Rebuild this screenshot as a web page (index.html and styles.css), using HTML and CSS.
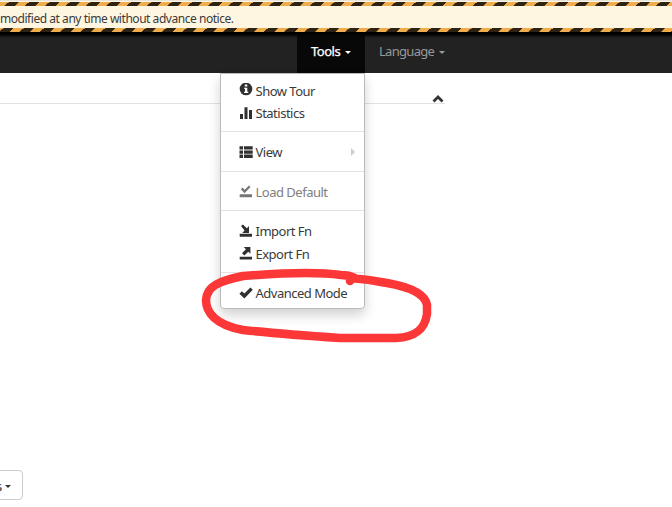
FILE: index.html
```html
<!DOCTYPE html>
<html lang="en">
<head>
<meta charset="utf-8">
<title>Tools</title>
<link rel="stylesheet" href="styles.css">
</head>
<body>
<div class="notice">
  <svg class="tape"><defs><pattern id="top" width="20.36" height="4" patternUnits="userSpaceOnUse" x="4.8"><path d="M3.9 0h9.8l-4 4H-.1z"/></pattern></defs><rect width="672" height="4" fill="url(#top)"/></svg>
  <p>modified at any time without advance notice.</p>
  <svg class="tape"><defs><pattern id="bottom" width="20.36" height="4" patternUnits="userSpaceOnUse" x="19.8"><path d="M3.9 0h9.8l-4 4H-.1z"/></pattern></defs><rect width="672" height="4" fill="url(#bottom)"/></svg>
</div>
<nav class="navbar">
  <div class="nav-item active">Tools<i class="caret"></i>
    <ul class="menu">
      <li><svg viewBox="0 0 14 14"><circle cx="7" cy="6" r="6.3"/><path fill="#fff" d="M5.8 1.6h2.5v2H5.8zM5 4.7h3.3v4h1v1.2H5V8.7h1V5.8H5z"/></svg><span>Show Tour</span></li>
      <li><svg viewBox="0 0 14 14"><path d="M1 8h3v5H1zM5.5 1.3h3V13h-3zM10 4h3v9h-3z"/></svg><span>Statistics</span></li>
      <li class="divider"></li>
      <li><svg viewBox="0 0 14 14"><path d="M.5 1.2H4v3.3H.5zM5 1.2h8.7v3.3H5zM.5 5.4H4v3.3H.5zM5 5.4h8.7v3.3H5zM.5 9.6H4v3.3H.5zM5 9.6h8.7v3.3H5z"/></svg><span>View</span><i class="arrow"></i></li>
      <li class="divider"></li>
      <li class="disabled"><svg viewBox="0 0 14 14"><path d="M.7 9.3h12.3v2.9H.7zM1.8 4.3l1.8-1.8 2 2.2L10 .4l1.5 1.5L5.5 8.2z"/></svg><span>Load Default</span></li>
      <li class="divider"></li>
      <li><svg viewBox="0 0 14 14"><path d="M.7 9.8h12.3v2.9H.7zM2 2 4 .4l3.8 3.8L10 2v7H3.3l2.2-2.5z"/></svg><span>Import Fn</span></li>
      <li><svg viewBox="0 0 14 14"><path d="M.7 9.7h12.3v2.8H.7zM4.8 0h6.6v6.8L9.3 4.7 5.4 8.6 3 6.2l3.9-3.9z"/></svg><span>Export Fn</span></li>
      <li class="divider"></li>
      <li><svg viewBox="0 0 14 14"><path d="M.4 7.7 2.9 5.2l2.5 2.4 6-6.2 2.4 2.4-8.4 8.6z"/></svg><span>Advanced Mode</span></li>
    </ul>
  </div>
  <div class="nav-item language">Language<i class="caret"></i></div>
</nav>
<main>
  <div class="panel-head"><svg class="chevron" viewBox="0 0 12 8"><path d="M1.5 6.5 6 2l4.5 4.5"/></svg></div>
  <button class="select">s<i class="caret"></i></button>
</main>
<svg class="marker" viewBox="0 0 672 507"><path d="M350 281L350 278C365 279 377 281 387 283C410 287 425 294 427 305V314C425 328 417 337 396 338H340C310 336 280 334 243 330C215 325 206 312 206 300C207 286 219 281 243 276C280 273 320 272 341 275C347 275 351 276 355 278"/></svg>
</body>
</html>
```
FILE: styles.css
```css
* { box-sizing: border-box; }
body {
  margin: 0;
  height: 507px;
  overflow: hidden;
  position: relative;
  background: #fff;
  color: #3a3a3a;
  font: 13px/20px "Noto Sans", "Open Sans", sans-serif;
  letter-spacing: -.5px;
}
.notice {
  height: 32px;
  padding-top: 1px;
  background: #fff5e0;
  border-top: 1px solid #e5e5dc;
}
.notice p {
  margin: 0;
  height: 22px;
  line-height: 25px;
  font-size: 12px;
  letter-spacing: -.46px;
  background: #fff6e2;
  white-space: nowrap;
}
.tape {
  display: block;
  width: 672px;
  height: 4px;
  background: #f0ad4e;
  fill: #2e2312;
  shape-rendering: crispEdges;
}
.navbar {
  height: 41px;
  display: flex;
  padding-left: 297px;
  background: linear-gradient(#000 0, #000 2px, #222 6px);
}
.nav-item {
  position: relative;
  padding: 9px 14px 0;
  color: #999;
  white-space: nowrap;
}
.nav-item.active {
  width: 68px;
  background: linear-gradient(#000, #080808 6px);
  color: #fff;
  -webkit-text-stroke: .25px #fff;
}
.nav-item.language { letter-spacing: -.7px; }
.caret {
  display: inline-block;
  margin-left: 5px;
  vertical-align: 2px;
  border: 3px solid transparent;
  border-top-color: currentColor;
  border-bottom: 0;
}
.menu {
  position: absolute;
  top: 41px;
  right: 0;
  width: 145px;
  height: 236px;
  margin: 0;
  padding: 5px 0 0;
  list-style: none;
  background: #fff;
  border: 1px solid #bbb;
  border-radius: 0 0 4px 4px;
  box-shadow: 0 6px 12px rgba(0, 0, 0, .18);
  color: #3a3a3a;
  -webkit-text-stroke: 0;
}
.menu li {
  display: flex;
  height: 22.5px;
  padding: 0 9px 0 17.5px;
  line-height: 23px;
}
.menu li:first-child { line-height: 24px; }
.menu svg {
  flex: none;
  width: 14px;
  height: 14px;
  margin: 4px 3px 0 0;
  fill: #303030;
}
.menu .divider {
  height: 1px;
  margin: 7px 0 9px;
  background: #e2e2e2;
}
.menu .disabled { color: #808080; }
.menu .disabled svg { fill: #777; }
.arrow {
  margin: 7px 0 0 auto;
  height: 8px;
  border: 4px solid transparent;
  border-left: 4px solid #ccc;
  border-right: 0;
}
.panel-head {
  width: 445px;
  height: 31px;
  padding: 22px 1px 0 0;
  border-bottom: 1px solid #e2e2e2;
  text-align: right;
  line-height: 0;
}
.chevron {
  width: 12px;
  height: 8px;
  fill: none;
  stroke: #333;
  stroke-width: 2.8;
}
.select {
  display: flex;
  align-items: center;
  width: 30px;
  height: 30px;
  margin: 366px 0 0 -7px;
  padding: 2px 0 0 2px;
  border: 1px solid #ccc;
  border-radius: 4px;
  background: #fff;
  color: #333;
  font: inherit;
}
.select .caret { margin-left: 3px; }
.marker {
  position: absolute;
  inset: 0;
  width: 672px;
  height: 507px;
  fill: none;
  stroke: #fc3737;
  stroke-width: 8.5;
  stroke-linecap: round;
  stroke-linejoin: round;
}
```
